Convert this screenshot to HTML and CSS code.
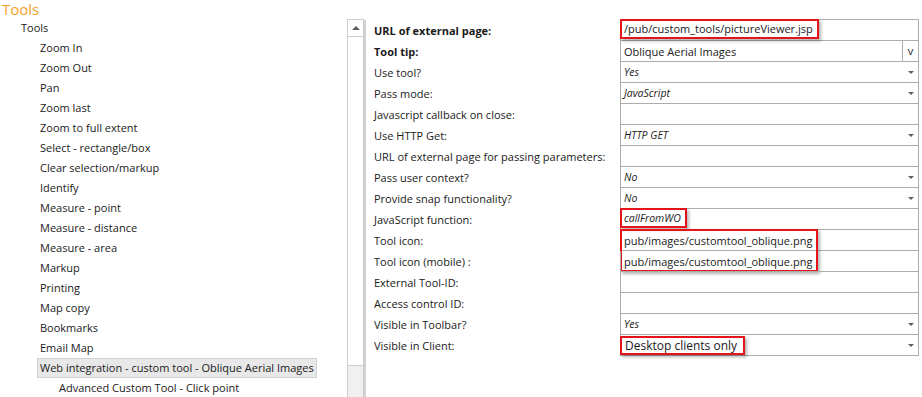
FILE: index.html
```html
<!DOCTYPE html>
<html lang="en">
<head>
    <meta charset="UTF-8">
    <title>Tools</title>
    <link rel="stylesheet" href="styles.css">
</head>
<body>
    <h1 class="title">Tools</h1>
    <div class="main">
        <div class="tree">
            <div class="tree-root">Tools</div>
            <ul class="tree-list">
                <li><span class="node">Zoom In</span></li>
                <li><span class="node">Zoom Out</span></li>
                <li><span class="node">Pan</span></li>
                <li><span class="node">Zoom last</span></li>
                <li><span class="node">Zoom to full extent</span></li>
                <li><span class="node">Select - rectangle/box</span></li>
                <li><span class="node">Clear selection/markup</span></li>
                <li><span class="node">Identify</span></li>
                <li><span class="node">Measure - point</span></li>
                <li><span class="node">Measure - distance</span></li>
                <li><span class="node">Measure - area</span></li>
                <li><span class="node">Markup</span></li>
                <li><span class="node">Printing</span></li>
                <li><span class="node">Map copy</span></li>
                <li><span class="node">Bookmarks</span></li>
                <li><span class="node">Email Map</span></li>
                <li><span class="node selected">Web integration - custom tool - Oblique Aerial Images</span></li>
                <li class="sub"><span class="node">Advanced Custom Tool - Click point</span></li>
            </ul>
        </div>

        <div class="scrollbar">
            <div class="scroll-btn"><span class="arrow-up"></span></div>
            <div class="scroll-thumb"></div>
            <div class="scroll-track"></div>
        </div>
        <div class="divider"></div>

        <div class="props">
            <div class="label bold">URL of external page:</div>
            <div class="value first"><span class="mark">/pub/custom_tools/pictureViewer.jsp</span></div>

            <div class="label bold">Tool tip:</div>
            <div class="value"><span class="text">Oblique Aerial Images</span><span class="btn-v">v</span></div>

            <div class="label">Use tool?</div>
            <div class="value select"><span class="text it">Yes</span><span class="caret"></span></div>

            <div class="label">Pass mode:</div>
            <div class="value select"><span class="text it">JavaScript</span><span class="caret"></span></div>

            <div class="label">Javascript callback on close:</div>
            <div class="value"></div>

            <div class="label">Use HTTP Get:</div>
            <div class="value select"><span class="text it">HTTP GET</span><span class="caret"></span></div>

            <div class="label">URL of external page for passing parameters:</div>
            <div class="value"></div>

            <div class="label">Pass user context?</div>
            <div class="value select"><span class="text it">No</span><span class="caret"></span></div>

            <div class="label">Provide snap functionality?</div>
            <div class="value select"><span class="text it">No</span><span class="caret"></span></div>

            <div class="label">JavaScript function:</div>
            <div class="value"><span class="mark it">callFromWO</span></div>

            <div class="label">Tool icon:</div>
            <div class="value"><span class="text">pub/images/customtool_oblique.png</span><span class="mark-pair"></span></div>

            <div class="label">Tool icon (mobile) :</div>
            <div class="value"><span class="text">pub/images/customtool_oblique.png</span></div>

            <div class="label">External Tool-ID:</div>
            <div class="value"></div>

            <div class="label">Access control ID:</div>
            <div class="value"></div>

            <div class="label">Visible in Toolbar?</div>
            <div class="value select"><span class="text it">Yes</span><span class="caret"></span></div>

            <div class="label">Visible in Client:</div>
            <div class="value select"><span class="mark big">Desktop clients only</span><span class="caret"></span></div>
        </div>
    </div>
</body>
</html>
```

FILE: styles.css
```css
body {
    margin: 0;
    height: 397px;
    overflow: hidden;
    background: #fff;
    color: #1a1a1a;
    font-family: "Open Sans", "Noto Sans", sans-serif;
    font-size: 11px;
}
.title {
    margin: 0;
    padding-left: 2px;
    height: 18px;
    line-height: 19px;
    font-size: 15px;
    font-weight: normal;
    color: #f4a028;
}
.main {
    display: flex;
    height: 379px;
}

/* tree */
.tree {
    width: 347px;
    flex: none;
}
.tree-root {
    height: 20px;
    line-height: 20px;
    padding-left: 21px;
}
.tree-list {
    list-style: none;
    margin: 0;
    padding: 0;
}
.tree-list li {
    height: 20px;
    line-height: 20px;
    padding-left: 40px;
}
.tree-list li.sub {
    padding-left: 59px;
}
.node {
    display: inline-block;
    line-height: 18px;
    padding: 0 2px;
    margin-left: -3px;
    border: 1px solid transparent;
}
.node.selected {
    background: #e8e8e8;
    border-color: #d2d2d2;
}

/* scrollbar */
.scrollbar {
    width: 15px;
    margin-top: 1px;
    border: 1px solid #cdcdcd;
    border-bottom: none;
    display: flex;
    flex-direction: column;
    flex: none;
}
.scroll-btn {
    height: 16px;
    border-bottom: 1px solid #cdcdcd;
    display: flex;
    justify-content: center;
    align-items: center;
}
.arrow-up {
    width: 0;
    height: 0;
    border-left: 4px solid transparent;
    border-right: 4px solid transparent;
    border-bottom: 4px solid #606060;
}
.scroll-thumb {
    height: 328px;
    background: #fff;
}
.scroll-track {
    flex: 1;
    background: #f0f0f0;
    border-top: 1px solid #cdcdcd;
}
.divider {
    width: 2px;
    margin-top: 2px;
    background: #d2d2d2;
    flex: none;
}

/* property grid */
.props {
    display: grid;
    grid-template-columns: 246px 299px;
    align-content: start;
    padding-left: 8px;
    margin-top: 1px;
}
.label {
    display: flex;
    align-items: center;
    white-space: nowrap;
}
.bold {
    font-weight: bold;
}
.value {
    position: relative;
    height: 20px;
    display: flex;
    align-items: center;
    border: 1px solid #adadad;
    border-top: none;
}
.value.first {
    border-top: 1px solid #adadad;
}
.text {
    flex: 1;
    padding-left: 3px;
    white-space: nowrap;
}
.it {
    font-style: italic;
    font-size: 10.5px;
}
.btn-v {
    width: 15px;
    height: 20px;
    line-height: 20px;
    text-align: center;
    border-left: 1px solid #adadad;
}
.caret {
    width: 0;
    height: 0;
    margin-left: auto;
    margin-right: 4px;
    border-left: 3px solid transparent;
    border-right: 3px solid transparent;
    border-top: 3px solid #606060;
}

/* red annotation boxes */
.mark {
    position: absolute;
    left: -1px;
    top: -1px;
    box-sizing: border-box;
    height: 20px;
    line-height: 16px;
    padding: 0 4px 0 2px;
    border: 2px solid #e5141b;
    box-shadow: 2px 2px 3px rgba(0, 0, 0, 0.3);
    white-space: nowrap;
}
.mark.big {
    top: 1px;
    height: 19px;
    line-height: 15px;
    padding: 0 6px 0 3px;
    font-size: 12px;
}
.mark-pair {
    position: absolute;
    left: -1px;
    top: -1px;
    width: 198px;
    height: 43px;
    box-sizing: border-box;
    border: 2px solid #e5141b;
    box-shadow: 2px 2px 3px rgba(0, 0, 0, 0.3);
}
```
